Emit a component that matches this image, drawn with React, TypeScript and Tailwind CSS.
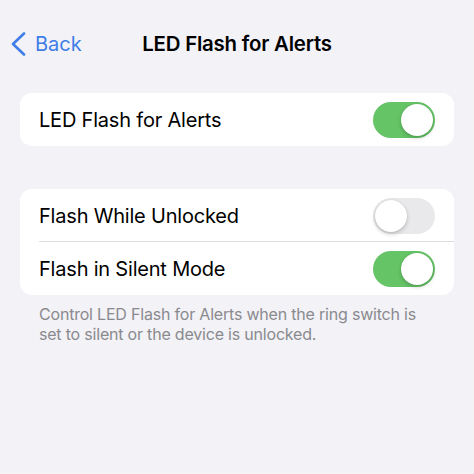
import { useState } from "react";

function Toggle({ on, onChange }: { on: boolean; onChange: () => void }) {
  return (
    <button
      onClick={onChange}
      className={`relative h-[36px] w-[62px] shrink-0 rounded-full transition-colors ${
        on ? "bg-[#65c466]" : "bg-[#e9e9eb]"
      }`}
    >
      <span
        className={`absolute top-[2px] h-[32px] w-[32px] rounded-full bg-white shadow-[0_2px_4px_rgba(0,0,0,0.2),0_0_1px_rgba(0,0,0,0.15)] transition-all ${
          on ? "left-[28px]" : "left-[2px]"
        }`}
      />
    </button>
  );
}

function Row({
  label,
  on,
  onChange,
  divider,
}: {
  label: string;
  on: boolean;
  onChange: () => void;
  divider?: boolean;
}) {
  return (
    <div className="relative flex h-[53px] items-center justify-between pl-[19px] pr-[19px]">
      <span className="text-[20px] tracking-[-0.2px] text-black">{label}</span>
      <Toggle on={on} onChange={onChange} />
      {divider && <div className="absolute bottom-0 left-[19px] right-0 h-px bg-[#dcdce0]" />}
    </div>
  );
}

export default function App() {
  const [ledFlash, setLedFlash] = useState(true);
  const [whileUnlocked, setWhileUnlocked] = useState(false);
  const [silentMode, setSilentMode] = useState(true);

  return (
    <div className="h-[474px] w-[474px] bg-[#f2f2f7] font-['Inter','Noto_Sans',sans-serif]">
      {/* nav bar */}
      <div className="relative flex h-[88px] items-center px-[10px]">
        <button className="flex items-center gap-[9px] text-[#3f7ee8]">
          <svg width="16" height="24" viewBox="0 0 16 24" fill="none">
            <path d="M14 1.5 L3 12 L14 22.5" stroke="currentColor" strokeWidth="2.6" strokeLinecap="round" strokeLinejoin="round" />
          </svg>
          <span className="text-[20px]">Back</span>
        </button>
        <div className="pointer-events-none absolute left-0 right-0 text-center text-[20.4px] font-semibold tracking-[-0.2px] text-black">
          LED Flash for Alerts
        </div>
      </div>

      <div className="px-[20px]">
        <div className="mt-[5px] overflow-hidden rounded-[12px] bg-white">
          <Row label="LED Flash for Alerts" on={ledFlash} onChange={() => setLedFlash(!ledFlash)} />
        </div>

        <div className="mt-[43px] overflow-hidden rounded-[12px] bg-white">
          <Row
            label="Flash While Unlocked"
            on={whileUnlocked}
            onChange={() => setWhileUnlocked(!whileUnlocked)}
            divider
          />
          <Row label="Flash in Silent Mode" on={silentMode} onChange={() => setSilentMode(!silentMode)} />
        </div>

        <p className="whitespace-nowrap pl-[19px] pt-[9px] text-[16px] leading-[20px] tracking-[-0.2px] text-[#8a8a8e]">
          Control LED Flash for Alerts when the ring switch is
          <br />
          set to silent or the device is unlocked.
        </p>
      </div>
    </div>
  );
}
